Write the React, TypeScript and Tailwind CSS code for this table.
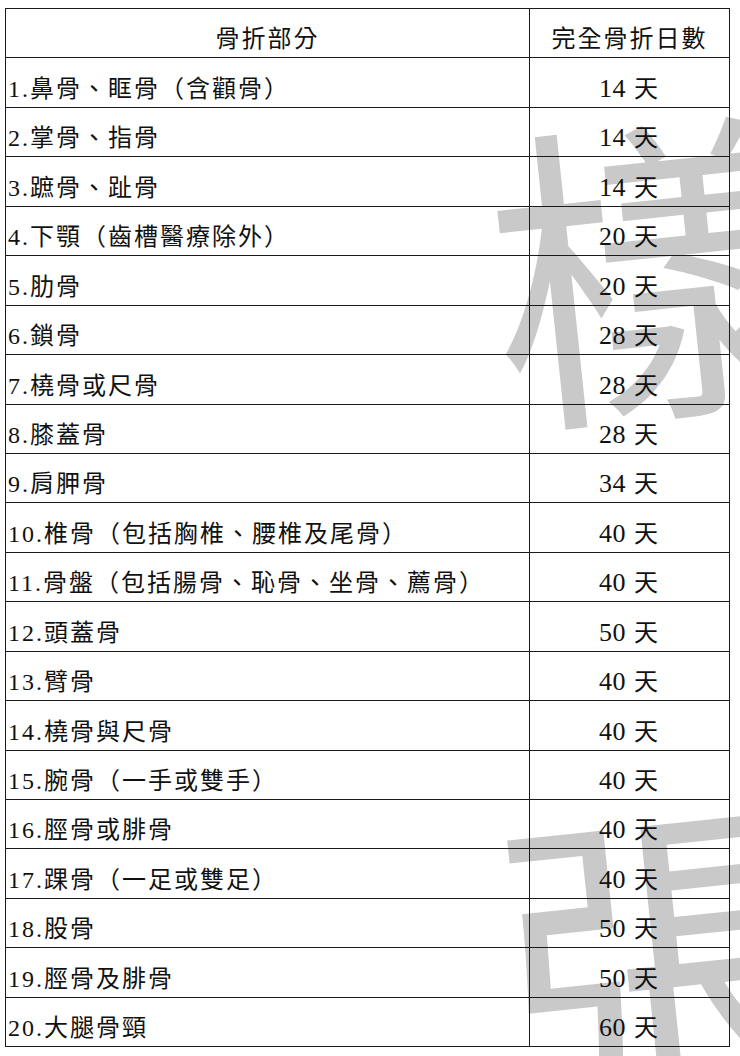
import React from 'react';

const rows: [string, string][] = [
  ['1.鼻骨、眶骨（含顴骨）', '14'],
  ['2.掌骨、指骨', '14'],
  ['3.蹠骨、趾骨', '14'],
  ['4.下顎（齒槽醫療除外）', '20'],
  ['5.肋骨', '20'],
  ['6.鎖骨', '28'],
  ['7.橈骨或尺骨', '28'],
  ['8.膝蓋骨', '28'],
  ['9.肩胛骨', '34'],
  ['10.椎骨（包括胸椎、腰椎及尾骨）', '40'],
  ['11.骨盤（包括腸骨、恥骨、坐骨、薦骨）', '40'],
  ['12.頭蓋骨', '50'],
  ['13.臂骨', '40'],
  ['14.橈骨與尺骨', '40'],
  ['15.腕骨（一手或雙手）', '40'],
  ['16.脛骨或腓骨', '40'],
  ['17.踝骨（一足或雙足）', '40'],
  ['18.股骨', '50'],
  ['19.脛骨及腓骨', '50'],
  ['20.大腿骨頸', '60'],
];

function Row({ left, right, header }: { left: React.ReactNode; right: React.ReactNode; header?: boolean }) {
  return (
    <div className="flex h-[49.45px] border-b border-[#1a1a1a]">
      <div
        className={
          'flex w-[524px] items-end border-r border-[#1a1a1a] pb-[4px] ' +
          (header ? 'justify-center' : 'pl-[2px]')
        }
      >
        <span className="leading-[28px]">{left}</span>
      </div>
      <div className="flex flex-1 items-end justify-center pb-[4px]">
        <span className="leading-[28px]">{right}</span>
      </div>
    </div>
  );
}

export default function App() {
  return (
    <div className="relative h-[1056px] w-[740px] overflow-hidden bg-white text-[#111]">
      {/* watermark */}
      <div
        className="absolute left-[486px] top-[96px] -rotate-6 select-none text-[320px] leading-none text-[#c9c9c9]"
        style={{ fontFamily: '"Noto Sans CJK TC", sans-serif' }}
        aria-hidden="true"
      >
        樣
      </div>
      <div
        className="absolute left-[498px] top-[776px] -rotate-6 select-none text-[340px] leading-none text-[#c9c9c9]"
        style={{ fontFamily: '"Noto Sans CJK TC", sans-serif' }}
        aria-hidden="true"
      >
        張
      </div>

      <div
        className="relative z-10 ml-[5px] mt-[8px] w-[725px] border-x border-t border-[#1a1a1a] text-[24px] tracking-[2px]"
        style={{ fontFamily: '"Liberation Serif", "Noto Sans CJK TC", serif' }}
      >
        <Row left="骨折部分" right="完全骨折日數" header />
        {rows.map(([part, days]) => (
          <Row
            key={part}
            left={part}
            right={
              <>
                <span className="text-[26px] tracking-[0.5px]">{days}</span> 天
              </>
            }
          />
        ))}
      </div>
    </div>
  );
}
